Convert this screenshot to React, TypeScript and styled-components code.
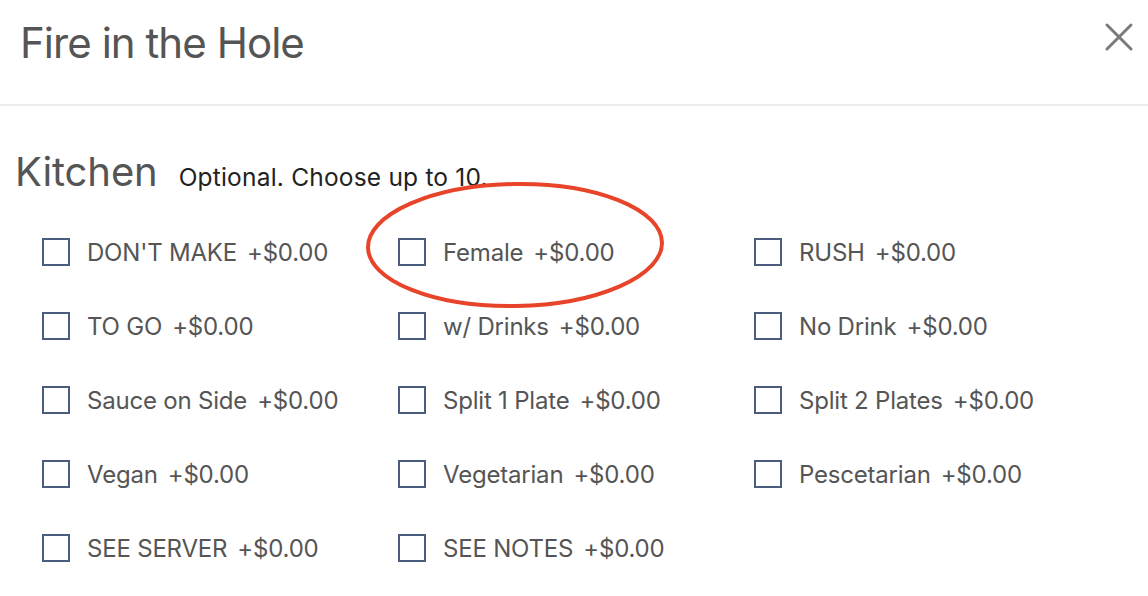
import styled, { createGlobalStyle } from "styled-components";

const GlobalStyle = createGlobalStyle`
  html, body {
    margin: 0;
    padding: 0;
    background: #ffffff;
  }
  body {
    font-family: "Inter", "Liberation Sans", sans-serif;
    -webkit-font-smoothing: antialiased;
  }
`;

const Modal = styled.div`
  width: 1148px;
  height: 596px;
  background: #ffffff;
  overflow: hidden;
  position: relative;
`;

const Header = styled.div`
  height: 106px;
  border-bottom: 2px solid #ececec;
  display: flex;
  align-items: flex-start;
  justify-content: space-between;
  box-sizing: border-box;
  padding: 18px 14px 0 20px;
`;

const Title = styled.h1`
  margin: 0;
  font-size: 42px;
  line-height: 50px;
  font-weight: 400;
  color: #555555;
  letter-spacing: -0.95px;
`;

const CloseButton = styled.button`
  border: none;
  background: none;
  padding: 0;
  margin-top: 4px;
  width: 30px;
  height: 30px;
  cursor: pointer;
  display: flex;
  align-items: center;
  justify-content: center;
`;

const Body = styled.div`
  padding: 42px 0 0 15px;
`;

const SectionHead = styled.div`
  display: flex;
  align-items: baseline;
  gap: 21px;
  margin-bottom: 42px;
`;

const SectionTitle = styled.h2`
  margin: 0;
  font-size: 40px;
  line-height: 48px;
  font-weight: 400;
  color: #555555;
  letter-spacing: -0.1px;
`;

const SectionHint = styled.span`
  font-size: 24.5px;
  color: #222222;
  letter-spacing: 0.2px;
`;

const Grid = styled.div`
  display: grid;
  grid-template-columns: repeat(3, 356px);
  row-gap: 46px;
  padding-left: 27px;
`;

const Option = styled.label`
  display: flex;
  align-items: center;
  height: 28px;
  gap: 17px;
  font-size: 24px;
  color: #555555;
  letter-spacing: -0.2px;
  cursor: pointer;
`;

const Box = styled.span`
  width: 28px;
  height: 28px;
  box-sizing: border-box;
  border: 2.5px solid #4b5d7f;
  flex-shrink: 0;
`;

const Price = styled.span`
  margin-left: 10px;
`;

const Highlight = styled.svg`
  position: absolute;
  left: 364px;
  top: 179px;
  pointer-events: none;
`;

const options = [
  "DON'T MAKE",
  "Female",
  "RUSH",
  "TO GO",
  "w/ Drinks",
  "No Drink",
  "Sauce on Side",
  "Split 1 Plate",
  "Split 2 Plates",
  "Vegan",
  "Vegetarian",
  "Pescetarian",
  "SEE SERVER",
  "SEE NOTES",
];

export default function App() {
  return (
    <>
      <GlobalStyle />
      <Modal>
        <Header>
          <Title>Fire in the Hole</Title>
          <CloseButton aria-label="Close">
            <svg width="30" height="30" viewBox="0 0 30 30">
              <path
                d="M3 3 L27 27 M27 3 L3 27"
                stroke="#7a7a7a"
                strokeWidth="3"
                strokeLinecap="round"
              />
            </svg>
          </CloseButton>
        </Header>
        <Body>
          <SectionHead>
            <SectionTitle>Kitchen</SectionTitle>
            <SectionHint>Optional. Choose up to 10.</SectionHint>
          </SectionHead>
          <Grid>
            {options.map((name) => (
              <Option key={name}>
                <Box />
                <span>
                  {name}
                  <Price>+$0.00</Price>
                </span>
              </Option>
            ))}
          </Grid>
        </Body>
        <Highlight width="304" height="132" viewBox="0 0 304 132">
          <ellipse
            cx="151"
            cy="66"
            rx="147"
            ry="61"
            fill="none"
            stroke="#e8442a"
            strokeWidth="4"
            transform="rotate(-1 151 66)"
          />
        </Highlight>
      </Modal>
    </>
  );
}
